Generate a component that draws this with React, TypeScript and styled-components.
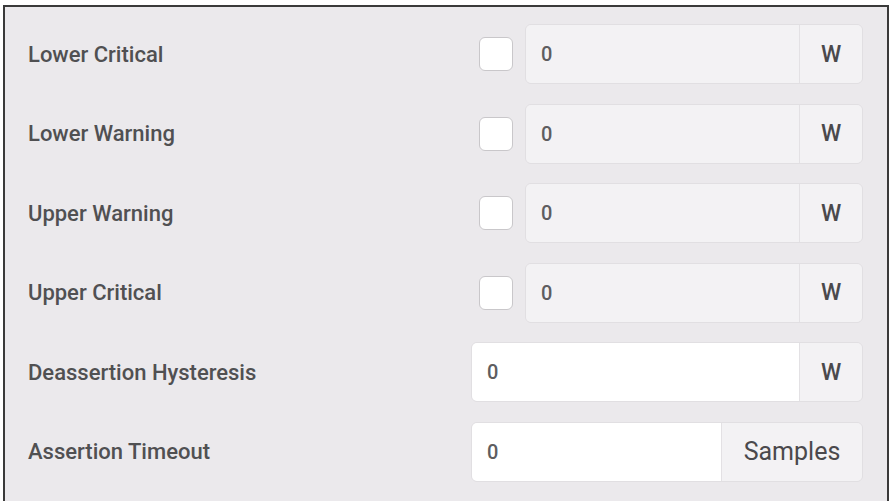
import React from 'react';
import styled, { createGlobalStyle } from 'styled-components';

interface Threshold {
  label: string;
  value: string;
  unit: string;
  checkbox?: boolean;
}

const thresholds: Threshold[] = [
  { label: 'Lower Critical', value: '0', unit: 'W', checkbox: true },
  { label: 'Lower Warning', value: '0', unit: 'W', checkbox: true },
  { label: 'Upper Warning', value: '0', unit: 'W', checkbox: true },
  { label: 'Upper Critical', value: '0', unit: 'W', checkbox: true },
  { label: 'Deassertion Hysteresis', value: '0', unit: 'W' },
  { label: 'Assertion Timeout', value: '0', unit: 'Samples' },
];

const App = () => {
  return (
    <>
      <GlobalStyle />
      <Frame>
        {thresholds.map(t => (
          <Row key={t.label}>
            <Label>{t.label}</Label>
            <Controls>
              {t.checkbox && <Checkbox type="checkbox" />}
              <InputGroup>
                <Input defaultValue={t.value} $disabled={!!t.checkbox} readOnly />
                <Addon $wide={t.unit.length > 1}>{t.unit}</Addon>
              </InputGroup>
            </Controls>
          </Row>
        ))}
      </Frame>
    </>
  );
};

export default App;

const GlobalStyle = createGlobalStyle`
  body {
    margin: 0;
    background: #fff;
    font-family: Roboto, "Noto Sans", sans-serif;
    overflow: hidden;
  }
`;

const Frame = styled.div`
  margin: 5px 6px 0 3px;
  height: 520px;
  border: 2px solid #3a3a3a;
  border-bottom: none;
  background: #ebe9ec;
  padding: 18px 24px 0 23px;
  display: flex;
  flex-direction: column;
  gap: 21.6px;
`;

const Row = styled.div`
  display: flex;
  align-items: center;
  height: 58px;
`;

const Label = styled.div`
  flex: 1;
  font-size: 22px;
  font-weight: 500;
  color: #505052;
`;

const Controls = styled.div`
  width: 392px;
  height: 100%;
  display: flex;
  align-items: center;
  justify-content: flex-end;
  gap: 12px;
`;

const Checkbox = styled.input`
  appearance: none;
  margin: 0 0 0 8px;
  width: 34px;
  height: 34px;
  border: 1px solid #c9c7ca;
  border-radius: 6px;
  background: #fff;
`;

const InputGroup = styled.div`
  flex: 1;
  height: 100%;
  display: flex;
  border: 1px solid #e1dfe2;
  border-radius: 6px;
  overflow: hidden;
`;

const Input = styled.input<{ $disabled: boolean }>`
  flex: 1;
  min-width: 0;
  border: none;
  outline: none;
  padding: 0 15px;
  font-family: inherit;
  font-size: 20px;
  font-weight: 500;
  color: #5e5d60;
  background: ${p => (p.$disabled ? '#f3f2f4' : '#fff')};
`;

const Addon = styled.div<{ $wide: boolean }>`
  width: ${p => (p.$wide ? '140px' : '62px')};
  display: flex;
  align-items: center;
  justify-content: center;
  border-left: 1px solid #e3e1e4;
  background: #f3f2f4;
  font-size: ${p => (p.$wide ? '25px' : '23px')};
  font-weight: ${p => (p.$wide ? 400 : 500)};
  color: #4a494c;
`;
